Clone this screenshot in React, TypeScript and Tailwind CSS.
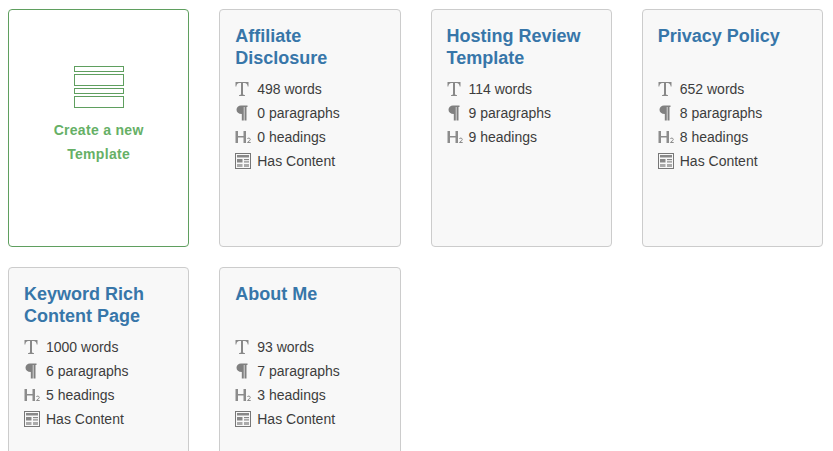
const templates = [
  { title: 'Affiliate Disclosure', words: 498, paragraphs: 0, headings: 0, content: true },
  { title: 'Hosting Review Template', words: 114, paragraphs: 9, headings: 9, content: false },
  { title: 'Privacy Policy', words: 652, paragraphs: 8, headings: 8, content: true },
  { title: 'Keyword Rich Content Page', words: 1000, paragraphs: 6, headings: 5, content: true },
  { title: 'About Me', words: 93, paragraphs: 7, headings: 3, content: true }
]

const WordsIcon = () => (
  <svg className="w-4 h-4 flex-none" viewBox="0 0 16 16" fill="#888">
    <path d="M0.500 1H13.500V5.500H12.700C12.500 3.300 11.500 2 9.500 2H8V13.600L10 14.300V15H4V14.300L6 13.600V2H4.500C2.500 2 1.500 3.300 1.300 5.500H0.500Z" />
  </svg>
)

const ParagraphIcon = () => (
  <svg className="w-4 h-4 flex-none" viewBox="0 0 16 16" fill="#808080">
    <path d="M6 0.500H12.500V2H11.500V15.500H9.500V2H8.800V15.500H6.800V9C3.500 9 1.500 7.400 1.500 4.800S3.500 0.500 6 0.500Z" />
  </svg>
)

const HeadingIcon = () => (
  <svg className="w-4 h-4 flex-none" viewBox="0 0 16 16" fill="none">
    <path d="M0.500 2H3V7H8.500V2H11V14H8.500V8.500H3V14H0.500Z" fill="#8c8c8c" />
    <path d="M12.300 10C12.600 8.700 15.300 8.700 15.300 10.500C15.300 11.800 13 12.300 12.400 13.500H15.700" stroke="#8c8c8c" strokeWidth={1} />
  </svg>
)

const ContentIcon = () => (
  <svg className="w-4 h-4 flex-none" viewBox="0 0 16 16" fill="none">
    <rect x="0.500" y="0.500" width="15" height="15" stroke="#777" />
    <rect x="2" y="2" width="12" height="2.500" fill="#888" />
    <rect x="2" y="6" width="5.500" height="3.500" fill="#888" />
    <rect x="9" y="6" width="5" height="1.200" fill="#888" />
    <rect x="9" y="8.300" width="5" height="1.200" fill="#888" />
    <rect x="2" y="11" width="5.500" height="3" fill="#aaa" />
    <rect x="9" y="11" width="5" height="3" fill="#aaa" />
  </svg>
)

const Stat = ({ icon, label }: { icon: React.ReactNode; label: string }) => (
  <li className="flex items-center h-6 gap-[6px]">
    {icon}
    <span>{label}</span>
  </li>
)

const CreateCard = () => (
  <div className="h-[238px] rounded border border-[#5f9f5f] bg-white flex flex-col items-center pt-[56px] font-bold text-[#66b066] text-sm leading-6 tracking-[0.3px]">
    <svg className="w-[50px] h-[42px] mb-[10px]" viewBox="0 0 50 42" fill="none" stroke="#5f9f5f">
      <rect x="0.500" y="0.500" width="49" height="5" />
      <rect x="0.500" y="8.500" width="49" height="11" />
      <rect x="0.500" y="22.500" width="49" height="5" />
      <rect x="0.500" y="30.500" width="49" height="11" />
    </svg>
    <div>Create a new</div>
    <div>Template</div>
  </div>
)

const TemplateCard = ({ title, words, paragraphs, headings, content }: (typeof templates)[number]) => (
  <div className="h-[238px] rounded border border-[#ccc] bg-[#f8f8f8] pt-[15px] px-[15px]">
    <h3 className="h-[44px] mb-2 text-lg leading-[22px] font-bold text-[#3776a9]">{title}</h3>
    <ul className="text-sm text-[#3d3d3d]">
      <Stat icon={<WordsIcon />} label={`${words} words`} />
      <Stat icon={<ParagraphIcon />} label={`${paragraphs} paragraphs`} />
      <Stat icon={<HeadingIcon />} label={`${headings} headings`} />
      {content && <Stat icon={<ContentIcon />} label="Has Content" />}
    </ul>
  </div>
)

export default function App() {
  return (
    <div className="h-[451px] overflow-hidden bg-white font-['Liberation_Sans',Arial,sans-serif]">
      <div className="grid grid-cols-4 gap-x-[30px] gap-y-5 pl-2 pr-[10px] pt-[9px]">
        <CreateCard />
        {templates.map((t) => (
          <TemplateCard key={t.title} {...t} />
        ))}
      </div>
    </div>
  )
}
